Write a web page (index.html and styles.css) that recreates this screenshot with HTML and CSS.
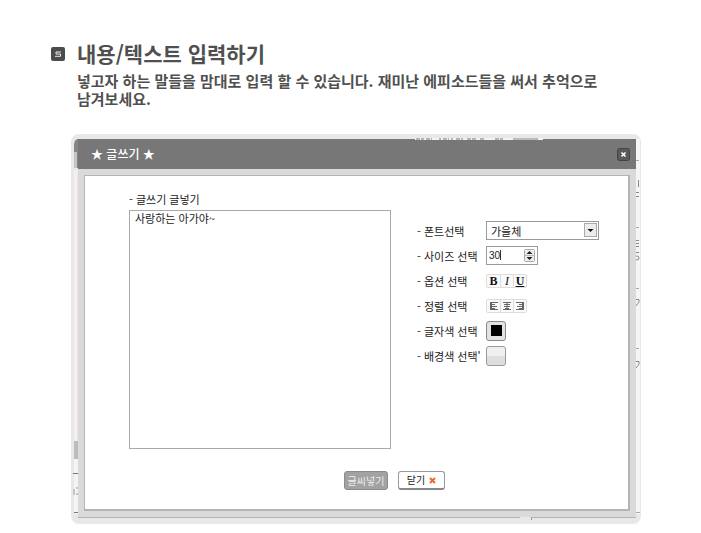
FILE: index.html
```html
<!DOCTYPE html>
<html lang="ko">
<head>
<meta charset="utf-8">
<title>내용/텍스트 입력하기</title>
<link rel="stylesheet" href="styles.css">
</head>
<body>
<main class="guide">
  <header class="intro">
    <svg class="step" viewBox="0 0 14 14" role="img" aria-label="5"><rect width="14" height="14" rx="2" fill="#4c4c4c"/><path d="M10 5H5V7H9.500V9.300H4" fill="none" stroke="#eee"/></svg>
    <div class="intro-text">
      <h1>내용/텍스트 입력하기</h1>
      <p>넣고자 하는 말들을 맘대로 입력 할 수 있습니다. 재미난 에피소드들을 써서 추억으로 남겨보세요.</p>
    </div>
  </header>

  <section class="frame">
    <svg class="edge edge-left" width="7" height="389" viewBox="0 0 7 389" aria-hidden="true">
      <path d="M3 12Q3 5 7 5V34H3z" fill="#858585"/>
      <path d="M3 18H6V34H3z" fill="#c4c4c4"/>
      <path d="M3 36H6V307H3z" fill="#f7eeee"/>
      <path d="M3 307H7V325H3z" fill="#bcbcbc"/>
      <path d="M3 325H7V380H3z" fill="#f4f4f4"/>
      <path d="M2 339.500H7M3 378.500H7" stroke="#777"/>
      <path d="M3 355V361M6 353V355M6 359V361" stroke="#999"/>
    </svg>
    <svg class="edge edge-top" width="128" height="5" viewBox="0 0 128 5" aria-hidden="true">
      <path d="M0 3H128V5H0z" fill="#f3f3f3"/>
      <path d="M1 4H9M11 4H17M25 3V5M28 4H34M37 3V5M41 4H48M52 4H62M65 4H70M80 4H88" stroke="#777" stroke-dasharray="4 1"/>
      <path d="M98 4H123" stroke="#bbb" stroke-width="2"/>
    </svg>
    <svg class="edge edge-right" width="5" height="389" viewBox="0 0 5 389" aria-hidden="true">
      <path d="M0 5H4V380H0z" fill="#f5f5f5"/>
      <path d="M0 26.500H3M0 93.500H3M0 154.500H3M0 214.500H3M0 378.500H4" stroke="#aaa"/>
      <path d="M2.500 46V53M0 58.500H3M0 62.500H3M0 106.500H3M0 109.500H3M0 112.500H3M0 118.500H3M0 165.500H3V168L0 172M0 227.500H3V230L0 234" fill="none" stroke="#888"/>
      <circle cx="1" cy="124" r="2" fill="none" stroke="#888"/>
    </svg>
    <svg class="edge edge-bottom" width="12" height="3" viewBox="0 0 12 3" aria-hidden="true"><path d="M0 0H12V3H0z" fill="#e8e8e8"/><path d="M11.500 0V3" stroke="#999"/></svg>

    <form class="dialog">
      <div class="titlebar">
        <h2>★ 글쓰기 ★</h2>
        <button type="button" class="close" aria-label="닫기"><svg width="13" height="13" viewBox="0 0 13 13"><rect x=".5" y=".5" width="12" height="12" rx="2" fill="#5a5a5a" stroke="#444"/><path d="M4.500 4.500L8.500 8.500M8.500 4.500L4.500 8.500" stroke="#fff" stroke-width="1.600"/></svg></button>
      </div>
      <div class="panel">
        <div class="columns">
          <div class="writing">
            <label for="body">- 글쓰기 글넣기</label>
            <textarea id="body" spellcheck="false">사랑하는 아가야~</textarea>
          </div>
          <div class="settings">
            <div class="row">
              <label for="font">- 폰트선택</label>
              <div class="select-box">
                <select id="font"><option>가을체</option></select>
                <svg class="arrow" width="13" height="14" viewBox="0 0 13 14" aria-hidden="true"><rect x=".5" y=".5" width="12" height="13" fill="#ececec" stroke="#aaa"/><path d="M3.500 6H9.500L6.500 9z" fill="#111"/></svg>
              </div>
            </div>
            <div class="row">
              <label for="size">- 사이즈 선택</label>
              <div class="number-box">
                <input id="size" type="number" value="30">
                <svg class="spinner" width="11" height="13" viewBox="0 0 11 13" aria-hidden="true"><rect x=".5" y=".5" width="10" height="12" rx="1" fill="#eee" stroke="#aaa"/><path d="M1 6.500H10" stroke="#bbb"/><path d="M2.500 5H8.500L5.500 2zM2.500 8H8.500L5.500 11z" fill="#222"/></svg>
                <span class="caret"></span>
              </div>
            </div>
            <div class="row">
              <span class="name">- 옵션 선택</span>
              <div class="tools">
                <button type="button" class="bold">B</button>
                <button type="button" class="italic">I</button>
                <button type="button" class="underline">U</button>
              </div>
            </div>
            <div class="row">
              <span class="name">- 정렬 선택</span>
              <div class="tools">
                <button type="button" aria-label="왼쪽"><svg width="8" height="8" viewBox="0 0 8 8"><path d="M0 .5H8M0 2.500H5M0 4.500H7M0 6.500H5M0 7.500H8M.5 0V8M1.500 0V8" stroke="#666"/></svg></button>
                <button type="button" aria-label="가운데"><svg width="8" height="8" viewBox="0 0 8 8"><path d="M0 .5H8M1 2.500H7M1 4.500H7M2 6.500H6M0 7.500H8M4 0V8" stroke="#666"/></svg></button>
                <button type="button" aria-label="오른쪽"><svg width="8" height="8" viewBox="0 0 8 8"><path d="M0 .5H8M3 2.500H8M1 4.500H8M3 6.500H8M0 7.500H8M7.500 0V8M6.500 0V8" stroke="#666"/></svg></button>
              </div>
            </div>
            <div class="row">
              <span class="name">- 글자색 선택</span>
              <button type="button" class="swatch" aria-label="글자색"><span class="ink"></span></button>
            </div>
            <div class="row">
              <span class="name">- 배경색 선택'</span>
              <button type="button" class="swatch blank" aria-label="배경색"></button>
            </div>
          </div>
        </div>
        <div class="actions">
          <button type="button" class="insert">글씨넣기</button>
          <button type="button" class="cancel">닫기 <svg width="7" height="7" viewBox="0 0 7 7" aria-hidden="true"><path d="M1 1L6 6M6 1L1 6" stroke="#f06a22" stroke-width="2"/></svg></button>
        </div>
      </div>
    </form>
  </section>
</main>
</body>
</html>
```

FILE: styles.css
```css
* { box-sizing: border-box; }

body {
  margin: 0;
  background: #fff;
  color: #222;
  font: 11px/16px "Noto Sans CJK KR", sans-serif;
}

button, input, select, textarea {
  margin: 0;
  padding: 0;
  font: inherit;
  color: inherit;
}

svg { display: block; }

.guide { padding: 40px 60px 10px 51px; }

.intro { display: flex; gap: 12px; }

.step {
  flex: none;
  width: 14px;
  height: 14px;
  margin-top: 7px;
}

.intro-text { color: #505050; }

h1 {
  margin: 0;
  font-size: 21px;
  line-height: 26px;
  font-weight: 700;
}

.intro p {
  margin: 6px 0 0;
  max-width: 540px;
  font-size: 15px;
  line-height: 18px;
  font-weight: 700;
  word-break: keep-all;
}

.frame {
  position: relative;
  margin: 26px 0 0 20px;
  padding: 5px 5px 6px 7px;
  border-radius: 8px;
  background: #e8e8e8;
}

.edge { position: absolute; }
.edge-left { left: 0; top: 0; }
.edge-right { right: 0; top: 0; }
.edge-top { left: 344px; top: 1px; }
.edge-bottom { right: 109px; bottom: 4px; }

.dialog {
  border-bottom: 1px solid #b4b4b4;
  background: #dadada;
}

.titlebar {
  display: flex;
  align-items: center;
  justify-content: space-between;
  height: 30px;
  padding: 0 6px 0 13px;
  background: #777;
}

h2 {
  margin: 0;
  color: #fff;
  font-size: 12px;
  line-height: 16px;
  font-weight: 500;
}

.close {
  border: 0;
  background: none;
}

.panel {
  margin: 6px;
  padding: 15px 29px 19px 44px;
  border: 1px solid #b4b4b4;
  border-right-width: 2px;
  border-bottom-width: 2px;
  background: #fff;
}

.columns {
  display: flex;
  gap: 26px;
}

.writing {
  display: flex;
  flex: 1;
  flex-direction: column;
  gap: 3px;
}

textarea {
  display: block;
  width: 100%;
  height: 239px;
  padding: 0 5px;
  border: 1px solid #aaa;
  border-radius: 0;
  background: #fff;
  line-height: 14px;
  resize: none;
  outline: 0;
}

.settings {
  width: 182px;
  padding-top: 27px;
}

.row {
  display: flex;
  align-items: center;
  height: 25px;
}

.row > label, .name {
  flex: none;
  width: 69px;
  white-space: nowrap;
}

.select-box {
  position: relative;
  flex: 1;
}

select {
  appearance: none;
  display: block;
  width: 100%;
  height: 19px;
  padding: 0 18px 0 4px;
  border: 1px solid #999;
  border-radius: 0;
  background: #fff;
}

.arrow {
  position: absolute;
  top: 2px;
  right: 2px;
  pointer-events: none;
}

.number-box { position: relative; }

.number-box input {
  appearance: textfield;
  display: block;
  width: 52px;
  height: 19px;
  padding: 0 16px 0 2px;
  border: 1px solid #999;
  border-radius: 0;
  background: #fff;
  font: 10px/16px "Liberation Sans", sans-serif;
}

.spinner {
  position: absolute;
  top: 3px;
  right: 3px;
  pointer-events: none;
}

.caret {
  position: absolute;
  top: 4px;
  left: 14px;
  width: 1px;
  height: 10px;
  background: #333;
}

.tools {
  display: flex;
  height: 14px;
  border: 1px solid #ddd;
  border-radius: 2px;
  background: #fafafa;
}

.tools button {
  display: flex;
  align-items: center;
  justify-content: center;
  width: 13px;
  border: 0;
  background: none;
  color: #111;
  font: bold 12px/12px "Liberation Serif", serif;
}

.tools button + button { border-left: 1px solid #ddd; }
.tools .italic { font-style: italic; font-weight: 400; }
.tools .underline { text-decoration: underline; }

.swatch {
  display: flex;
  align-items: center;
  justify-content: center;
  width: 20px;
  height: 20px;
  border: 1px solid #888;
  border-radius: 3px;
  background: #e2e2e2;
}

.swatch.blank {
  border-color: #999;
  background: linear-gradient(#f0f0f0 50%, #dedede 50%);
}

.ink {
  width: 11px;
  height: 11px;
  background: #000;
}

.actions {
  display: flex;
  gap: 10px;
  margin: 22px 0 0 215px;
}

.actions button {
  height: 19px;
  border-radius: 3px;
  line-height: 16px;
  white-space: nowrap;
}

.insert {
  width: 44px;
  border: 1px solid #8b8b8b;
  background: #a2a2a2;
  color: #eee;
  font-size: 10px;
}

.cancel {
  display: flex;
  align-items: center;
  justify-content: center;
  gap: 4px;
  width: 47px;
  border: 1px solid #999;
  border-bottom: 2px solid #888;
  background: #fff;
  font-size: 10px;
}
```
